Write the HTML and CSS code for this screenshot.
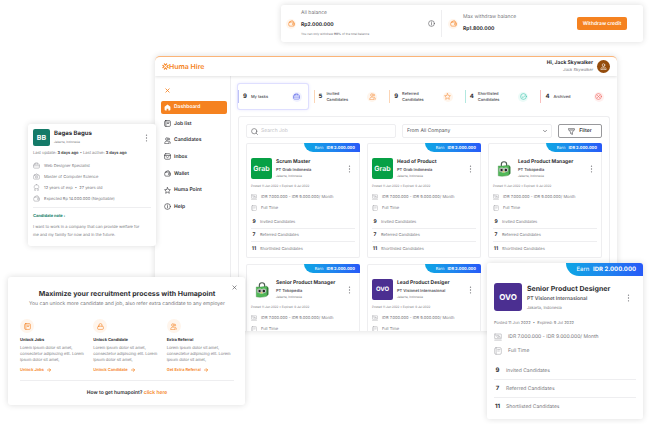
FILE: index.html
```html
<!DOCTYPE html>
<html lang="en">
<head>
<meta charset="utf-8">
<meta name="viewport" content="width=device-width, initial-scale=1">
<title>Huma Hire</title>
<link rel="stylesheet" href="styles.css">
</head>
<body>
<svg class="sprite" aria-hidden="true">
  <symbol id="i-wallet" viewBox="0 0 24 24"><rect x="2.5" y="7" width="19" height="14" rx="4"/><path d="M6 7c2-3 5-4.500 9-4.500 2 0 3 1.500 3 4.500M21.500 11.500h-4a2.500 2.500 0 0 0 0 5h4"/></symbol>
  <symbol id="i-info" viewBox="0 0 24 24"><circle cx="12" cy="12" r="10"/><path d="M12 11v6M12 6.500v1.500"/></symbol>
  <symbol id="i-close" viewBox="0 0 24 24"><path d="M4 4l16 16M20 4L4 20"/></symbol>
  <symbol id="i-home" viewBox="0 0 24 24"><path class="solid" d="M12 1.500L2 9.500V19a3.500 3.500 0 0 0 3.500 3.500H9V16h6v6.500h3.500A3.500 3.500 0 0 0 22 19V9.500z"/></symbol>
  <symbol id="i-doc" viewBox="0 0 24 24"><path d="M6 2h12a4 4 0 0 1 4 4v12a4 4 0 0 1-4 4H6a4 4 0 0 1-4-4V6a4 4 0 0 1 4-4zM6.500 2v20M11 7.500h7M11 12h5"/></symbol>
  <symbol id="i-people" viewBox="0 0 24 24"><circle cx="10" cy="7" r="4.500"/><path d="M2.500 21.500c0-5 2.500-7.500 7.500-7.500s7.500 2.500 7.500 7.500zM17 3.500a4 4 0 0 1 0 7.500M18.500 14.500c2.500 1 3.500 3.500 3.500 6.500"/></symbol>
  <symbol id="i-mail" viewBox="0 0 24 24"><rect x="2" y="2.500" width="20" height="19" rx="4"/><path d="M2 8.500h20M7 12l5 4 5-4"/></symbol>
  <symbol id="i-star" viewBox="0 0 24 24"><path d="M12 2l3 6.500 7 .8-5.200 4.900L18.300 21.500 12 18l-6.300 3.500 1.500-7.300L2 9.300l7-.8z"/></symbol>
  <symbol id="i-bag" viewBox="0 0 24 24"><rect x="2" y="6.500" width="20" height="14.500" rx="3"/><path d="M8 6.500V3h8v3.500M2 14h20"/></symbol>
  <symbol id="i-case" viewBox="0 0 24 24"><rect x="2" y="7" width="20" height="14" rx="3"/><path d="M8 7V3h8v4M2 13h20"/></symbol>
  <symbol id="i-degree" viewBox="0 0 24 24"><rect x="2" y="7" width="20" height="14" rx="3"/><path d="M6 7l6-4.500L18 7M9 12v5h6v-5z"/></symbol>
  <symbol id="i-medal" viewBox="0 0 24 24"><path d="M12 2a8 8 0 0 1 5 14.200H7A8 8 0 0 1 12 2zM7 16l-2 5.500h4M17 16l2 5.500h-4"/></symbol>
  <symbol id="i-check" viewBox="0 0 24 24"><circle cx="12" cy="12" r="10"/><path d="M7 12.500l3.500 3.500L17 9"/></symbol>
  <symbol id="i-cross" viewBox="0 0 24 24"><circle cx="12" cy="12" r="10"/><path d="M8 8l8 8M16 8l-8 8"/></symbol>
  <symbol id="i-search" viewBox="0 0 24 24"><circle cx="11" cy="11" r="9"/><path d="M17.500 17.500l5 5"/></symbol>
  <symbol id="i-funnel" viewBox="0 0 24 24"><path d="M2 2.500h20v4L15 14v8l-6-3v-5L2 6.500zM6 7h12"/></symbol>
  <symbol id="i-down" viewBox="0 0 24 24"><path d="M3 8l9 9 9-9"/></symbol>
  <symbol id="i-arrow" viewBox="0 0 24 24"><path d="M1 12h21M13 3l9 9-9 9"/></symbol>
  <symbol id="i-lock" viewBox="0 0 24 24"><rect x="2" y="11" width="20" height="11" rx="3.500"/><path d="M7 11V7a5 5 0 0 1 10 0v4"/></symbol>
  <symbol id="i-money" viewBox="0 0 24 24"><rect x="2" y="3" width="20" height="14" rx="1"/><circle cx="12" cy="10" r="3.500"/><path d="M2 21.500h20M5 7h2M17 13h2"/></symbol>
  <symbol id="i-dots" viewBox="0 0 4 14"><circle class="solid" cx="2" cy="2" r="1.100"/><circle class="solid" cx="2" cy="7" r="1.100"/><circle class="solid" cx="2" cy="12" r="1.100"/></symbol>
  <symbol id="i-burst" viewBox="0 0 24 24"><path d="M8 3l4 4 4-4M8 21l4-4 4 4M3 8l4 4-4 4M21 8l-4 4 4 4"/></symbol>
  <symbol id="i-user" viewBox="0 0 24 24"><circle cx="12" cy="7" r="4.500"/><path d="M3 21.500c0-5 3-8 9-8s9 3 9 8zM8 21l4-5 4 5"/></symbol>
  <symbol id="i-owl" viewBox="0 0 42 42">
    <path d="M14 13V9a7 7 0 0 1 14 0v4" fill="none" stroke="#4b5b50" stroke-width="3"/>
    <path d="M6 13c10 1 18-1 28-2v26c-7 3-20 4-28 2z" fill="#51b957" stroke="#3f8045"/>
    <path d="M34 11l4 4v18l-4 4z" fill="#347b3a"/>
    <path d="M8 21c4-5 10-5 12-1 3-4 9-4 12 0v5c-3 6-8 5-12 5s-10 1-12-5z" fill="#e2eadc"/>
    <circle cx="14" cy="23.500" r="5" fill="#f4f6f2" stroke="#354"/><circle cx="26.500" cy="23.500" r="5" fill="#f4f6f2" stroke="#354"/>
    <circle cx="14.500" cy="23.500" r="3.200" fill="#222"/><circle cx="26" cy="23.500" r="3.200" fill="#222"/>
    <path d="M17 27h6l-3 4z" fill="#eeb94b"/>
  </symbol>
</svg>
<div class="canvas">

  <div class="app">
    <header class="topbar">
      <a class="brand" href="#"><svg class="icon"><use href="#i-burst"/></svg>Huma Hire</a>
      <div class="user">
        <div class="user-text"><strong>Hi, Jack Skywalker</strong><span>Jack Skywalker</span></div>
        <span class="avatar"><svg class="icon"><use href="#i-user"/></svg></span>
      </div>
    </header>
    <div class="body">
      <div class="sidebar">
        <button class="collapse" aria-label="Close menu"><svg class="icon"><use href="#i-close"/></svg></button>
        <nav class="nav">
          <a class="nav-item active" href="#"><svg class="icon"><use href="#i-home"/></svg>Dashboard</a>
          <a class="nav-item" href="#"><svg class="icon"><use href="#i-doc"/></svg>Job list</a>
          <a class="nav-item" href="#"><svg class="icon"><use href="#i-people"/></svg>Candidates</a>
          <a class="nav-item" href="#"><svg class="icon"><use href="#i-mail"/></svg>Inbox</a>
          <a class="nav-item" href="#"><svg class="icon"><use href="#i-wallet"/></svg>Wallet</a>
          <a class="nav-item" href="#"><svg class="icon"><use href="#i-star"/></svg>Huma Point</a>
          <a class="nav-item" href="#"><svg class="icon"><use href="#i-info"/></svg>Help</a>
        </nav>
      </div>
      <main class="main">
        <section class="stats">
          <div class="stat blue selected"><strong>9</strong><span>My tasks</span><i class="bubble"><svg class="icon"><use href="#i-bag"/></svg></i></div>
          <div class="stat orange"><strong>5</strong><span>Invited<br>Candidates</span><i class="bubble"><svg class="icon"><use href="#i-people"/></svg></i></div>
          <div class="stat orange"><strong>9</strong><span>Referred<br>Candidates</span><i class="bubble"><svg class="icon"><use href="#i-star"/></svg></i></div>
          <div class="stat teal"><strong>4</strong><span>Shortlisted<br>Candidates</span><i class="bubble"><svg class="icon"><use href="#i-check"/></svg></i></div>
          <div class="stat red"><strong>4</strong><span>Archived</span><i class="bubble"><svg class="icon"><use href="#i-cross"/></svg></i></div>
        </section>
        <section class="panel">
          <form class="filters">
            <label class="field"><svg class="icon"><use href="#i-search"/></svg><input type="text" placeholder="Search Job" aria-label="Search job"></label>
            <label class="field"><select aria-label="Company"><option>From All Company</option></select><svg class="icon chevron"><use href="#i-down"/></svg></label>
            <button class="filter" type="button"><svg class="icon"><use href="#i-funnel"/></svg>Filter</button>
          </form>
          <div class="jobs">
            <article class="job">
              <div class="earn">Earn <b>IDR 2.000.000</b></div>
              <div class="job-head"><div class="logo grab">Grab</div><div class="job-name"><h3>Scrum Master</h3><h4>PT Grab Indonesia</h4><p>Jakarta, Indonesia</p></div><button class="more" aria-label="More"><svg><use href="#i-dots"/></svg></button></div>
              <p class="dates">Posted 11 Jun 2022 • Expired: 9 Jul 2022</p>
              <p class="fact"><svg class="icon"><use href="#i-money"/></svg>IDR 7.000.000 - IDR 9.000.000/ Month</p>
              <p class="fact"><svg class="icon"><use href="#i-doc"/></svg>Full Time</p>
              <ul class="counts"><li><b>9</b>Invited Candidates</li><li><b>7</b>Referred Candidates</li><li><b>11</b>Shortlisted Candidates</li></ul>
            </article>
            <article class="job">
              <div class="earn">Earn <b>IDR 2.000.000</b></div>
              <div class="job-head"><div class="logo grab">Grab</div><div class="job-name"><h3>Head of Product</h3><h4>PT Grab Indonesia</h4><p>Jakarta, Indonesia</p></div><button class="more" aria-label="More"><svg><use href="#i-dots"/></svg></button></div>
              <p class="dates">Posted 11 Jun 2022 • Expired: 9 Jul 2022</p>
              <p class="fact"><svg class="icon"><use href="#i-money"/></svg>IDR 7.000.000 - IDR 9.000.000/ Month</p>
              <p class="fact"><svg class="icon"><use href="#i-doc"/></svg>Full Time</p>
              <ul class="counts"><li><b>9</b>Invited Candidates</li><li><b>7</b>Referred Candidates</li><li><b>11</b>Shortlisted Candidates</li></ul>
            </article>
            <article class="job">
              <div class="earn">Earn <b>IDR 2.000.000</b></div>
              <div class="job-head"><div class="logo"><svg class="owl"><use href="#i-owl"/></svg></div><div class="job-name"><h3>Lead Product Manager</h3><h4>PT Tokopedia</h4><p>Jakarta, Indonesia</p></div><button class="more" aria-label="More"><svg><use href="#i-dots"/></svg></button></div>
              <p class="dates">Posted 11 Jun 2022 • Expired: 9 Jul 2022</p>
              <p class="fact"><svg class="icon"><use href="#i-money"/></svg>IDR 7.000.000 - IDR 9.000.000/ Month</p>
              <p class="fact"><svg class="icon"><use href="#i-doc"/></svg>Full Time</p>
              <ul class="counts"><li><b>9</b>Invited Candidates</li><li><b>7</b>Referred Candidates</li><li><b>11</b>Shortlisted Candidates</li></ul>
            </article>
            <article class="job">
              <div class="earn">Earn <b>IDR 2.000.000</b></div>
              <div class="job-head"><div class="logo"><svg class="owl"><use href="#i-owl"/></svg></div><div class="job-name"><h3>Senior Product Manager</h3><h4>PT Tokopedia</h4><p>Jakarta, Indonesia</p></div><button class="more" aria-label="More"><svg><use href="#i-dots"/></svg></button></div>
              <p class="dates">Posted 11 Jun 2022 • Expired: 9 Jul 2022</p>
              <p class="fact"><svg class="icon"><use href="#i-money"/></svg>IDR 7.000.000 - IDR 9.000.000/ Month</p>
              <p class="fact"><svg class="icon"><use href="#i-doc"/></svg>Full Time</p>
            </article>
            <article class="job">
              <div class="earn">Earn <b>IDR 2.000.000</b></div>
              <div class="job-head"><div class="logo ovo">OVO</div><div class="job-name"><h3>Lead Product Desiger</h3><h4>PT Visionet Internasional</h4><p>Jakarta, Indonesia</p></div><button class="more" aria-label="More"><svg><use href="#i-dots"/></svg></button></div>
              <p class="dates">Posted 11 Jun 2022 • Expired: 9 Jul 2022</p>
              <p class="fact"><svg class="icon"><use href="#i-money"/></svg>IDR 7.000.000 - IDR 9.000.000/ Month</p>
              <p class="fact"><svg class="icon"><use href="#i-doc"/></svg>Full Time</p>
            </article>
          </div>
        </section>
      </main>
    </div>
  </div>

  <section class="float balance">
    <div class="amount">
      <i class="bubble"><svg class="icon"><use href="#i-wallet"/></svg></i>
      <div class="amount-text"><span>All balance</span><strong>Rp2.000.000</strong><small>You can only withdraw <b>90%</b> of the total balance</small></div>
      <svg class="icon info"><use href="#i-info"/></svg>
    </div>
    <div class="amount">
      <i class="bubble"><svg class="icon"><use href="#i-wallet"/></svg></i>
      <div class="amount-text"><span>Max withdraw balance</span><strong>Rp1.800.000</strong></div>
      <button class="withdraw">Withdraw credit</button>
    </div>
  </section>

  <section class="float candidate">
    <div class="cand-head"><div class="initials">BB</div><div class="cand-name"><h3>Bagas Bagus</h3><p>Jakarta, Indonesia</p></div><button class="more" aria-label="More"><svg><use href="#i-dots"/></svg></button></div>
    <p class="updated">Last update: <b>3 days ago</b> • Last active: <b>3 days ago</b></p>
    <ul class="facts">
      <li><svg class="icon"><use href="#i-case"/></svg>Web Designer Specialist</li>
      <li><svg class="icon"><use href="#i-degree"/></svg>Master of Computer Science</li>
      <li><svg class="icon"><use href="#i-medal"/></svg>12 years of exp &nbsp;•&nbsp; 27 years old</li>
      <li><svg class="icon"><use href="#i-wallet"/></svg>Expected Rp 14.000.000 (Negotiable)</li>
    </ul>
    <div class="note"><h4>Candidate note :</h4><p>I want to work in a company that can provide welfare for<br>me and my family for now and in the future.</p></div>
  </section>

  <section class="float promo">
    <button class="dismiss" aria-label="Close"><svg class="icon"><use href="#i-close"/></svg></button>
    <h2>Maximize your recruitment process with Humapoint</h2>
    <p class="lead">You can unlock more candidate and job, also refer extra candidate to any employer</p>
    <div class="perks">
      <div class="perk"><i class="bubble"><svg class="icon"><use href="#i-doc"/></svg></i><h3>Unlock Jobs</h3><p>Lorem ipsum dolor sit amet,<br>consectetur adipiscing elit. Lorem<br>ipsum dolor sit amet,</p><a href="#">Unlock Jobs <svg class="icon"><use href="#i-arrow"/></svg></a></div>
      <div class="perk"><i class="bubble"><svg class="icon"><use href="#i-lock"/></svg></i><h3>Unlock Candidate</h3><p>Lorem ipsum dolor sit amet,<br>consectetur adipiscing elit. Lorem<br>ipsum dolor sit amet,</p><a href="#">Unlock Candidate <svg class="icon"><use href="#i-arrow"/></svg></a></div>
      <div class="perk"><i class="bubble"><svg class="icon"><use href="#i-people"/></svg></i><h3>Extra Referral</h3><p>Lorem ipsum dolor sit amet,<br>consectetur adipiscing elit. Lorem<br>ipsum dolor sit amet,</p><a href="#">Get Extra Referral <svg class="icon"><use href="#i-arrow"/></svg></a></div>
    </div>
    <p class="how">How to get humapoint? <a href="#">click here</a></p>
  </section>

  <article class="float job large">
    <div class="earn">Earn <b>IDR 2.000.000</b></div>
    <div class="job-head"><div class="logo ovo">OVO</div><div class="job-name"><h3>Senior Product Designer</h3><h4>PT Visionet Internasional</h4><p>Jakarta, Indonesia</p></div><button class="more" aria-label="More"><svg><use href="#i-dots"/></svg></button></div>
    <p class="dates">Posted 11 Jun 2022 &nbsp;•&nbsp; Expired: 9 Jul 2022</p>
    <p class="fact"><svg class="icon"><use href="#i-money"/></svg>IDR 7.000.000 - IDR 9.000.000/ Month</p>
    <p class="fact"><svg class="icon"><use href="#i-doc"/></svg>Full Time</p>
    <ul class="counts"><li><b>9</b>Invited Candidates</li><li><b>7</b>Referred Candidates</li><li><b>11</b>Shortlisted Candidates</li></ul>
  </article>
</div>
</body>
</html>
```
FILE: styles.css
```css
:root {
  --orange: #f58220;
  --ink: #2f2f33;
  --gray: #77777c;
  --line: #eeeef0;
}
* { box-sizing: border-box; margin: 0; padding: 0; }
body { background: #fff; color: var(--ink); font-family: Inter, "Liberation Sans", sans-serif; font-size: 4px; line-height: 6px; text-rendering: geometricPrecision; }
button, input, select { font: inherit; color: inherit; border: 0; background: none; text-rendering: inherit; }
a { color: inherit; text-decoration: none; }
ul { list-style: none; }
.sprite { position: absolute; width: 0; height: 0; }
.icon { width: 7px; height: 7px; flex: none; fill: none; stroke: currentColor; stroke-width: 2; stroke-linecap: round; stroke-linejoin: round; }
.solid { fill: currentColor; stroke: none; }
.canvas { position: relative; min-height: 100vh; overflow: hidden; }
.float { position: absolute; background: #fff; border-radius: 3px; box-shadow: 0 0 6px rgba(0, 0, 0, .14); }
.bubble { display: flex; align-items: center; justify-content: center; width: 10px; height: 10px; flex: none; border-radius: 50%; background: #fff5ec; color: var(--orange); }
.more { display: flex; align-self: center; }
.more svg { width: 3px; height: 8px; color: #77777c; }

/* Application window */
.app { position: absolute; left: 155px; right: 33px; top: 56px; bottom: 93px; display: flex; flex-direction: column; overflow: hidden; border-top: 1px solid #fbb478; border-radius: 5px 5px 0 0; background: #fff; box-shadow: 0 0 6px rgba(0, 0, 0, .14); }
.topbar { position: relative; display: flex; align-items: center; justify-content: space-between; height: 19px; flex: none; padding: 0 7px; box-shadow: 0 1px 3px rgba(0, 0, 0, .12); }
.brand { display: flex; align-items: center; color: var(--orange); font-size: 7px; font-weight: 600; line-height: 10px; }
.brand .icon { stroke-width: 4; }
.user { display: flex; align-items: center; gap: 4px; }
.user-text { display: flex; flex-direction: column; text-align: right; }
.user-text strong { font-size: 5px; line-height: 7px; font-weight: 700; }
.user-text span { color: var(--gray); font-style: italic; }
.avatar { display: flex; align-items: center; justify-content: center; width: 13px; height: 13px; border-radius: 50%; background: #944c0c; color: #fff; }
.body { display: flex; flex: 1; min-height: 0; }
.sidebar { flex: none; width: 76px; padding: 10px 3px 0 6px; border-right: 1px solid var(--line); }
.collapse { display: flex; align-items: center; height: 9px; margin: 0 0 4px 4px; color: var(--orange); }
.collapse .icon { width: 5px; height: 5px; stroke-width: 4; }
.nav { display: grid; grid-template-rows: repeat(7, 1fr); align-items: center; height: 116px; }
.nav-item { display: flex; align-items: center; gap: 3px; height: 13px; padding: 0 3px; border-radius: 2px; font-size: 5px; font-weight: 600; }
.nav-item.active { background: var(--orange); color: #fff; }
.main { display: flex; flex: 1; flex-direction: column; gap: 7px; min-width: 0; padding: 8px 7px 0; }
.stats { display: grid; grid-template-columns: repeat(5, 1fr); gap: 6px; }
.stat { display: flex; align-items: center; gap: 4px; height: 25px; padding-right: 6px; }
.stat::before { content: ""; width: 1px; height: 13px; background: currentColor; opacity: .4; }
.stat strong { color: var(--ink); font-size: 6px; font-weight: 700; }
.stat span { flex: 1; color: #4c4c51; font-weight: 500; }
.stat.selected { border-radius: 2px; box-shadow: 0 0 0 1px #dfdfff, 0 0 4px #dcdcff; }
.stat.blue { color: #5b67e8; }
.stat.orange { color: #f79545; }
.stat.teal { color: #3fc6b0; }
.stat.red { color: #f0605c; }
.stat .bubble { color: inherit; }
.stat.blue .bubble { background: #f0f1ff; }
.stat.teal .bubble { background: #ecfbf8; }
.stat.red .bubble { background: #fff0ef; }
.panel { flex: 1; padding: 7px; border: 1px solid var(--line); border-bottom: 0; border-radius: 3px 3px 0 0; }
.filters { display: flex; gap: 6px; }
.field { display: flex; flex: 1; align-items: center; gap: 3px; min-width: 0; height: 14px; padding: 0 4px; border: 1px solid var(--line); border-radius: 2px; color: #55555a; font-size: 5px; }
.field input, .field select { width: 100%; min-width: 0; height: 10px; outline: 0; appearance: none; }
.field input::placeholder { color: #c4c4c8; }
.field .chevron { width: 4px; height: 4px; stroke-width: 4; }
.filter { display: flex; align-items: center; justify-content: center; gap: 4px; width: 44px; height: 14px; border: 1px solid #99999c; border-radius: 2px; font-size: 5px; font-weight: 600; }
.jobs { display: grid; grid-template-columns: repeat(3, 1fr); gap: 6px 7px; margin-top: 5px; }

/* Job card */
.job { display: flex; flex-direction: column; padding: 0 5px 3px; border-radius: 2px; background: #fff; }
.jobs .job { box-shadow: inset 0 0 0 1px var(--line); }
.earn { align-self: flex-end; width: 56px; height: 9px; margin-right: -5px; padding-right: 5px; border-radius: 0 2px 0 9px; background: linear-gradient(80deg, #0ca7e4, #1f86ee 50%, #2858f8); color: #fff; font-size: 4px; line-height: 9px; text-align: right; }
.earn b { margin-left: 2px; font-weight: 700; }
.job-head { display: flex; gap: 4px; margin-top: 6px; padding-right: 4px; }
.logo { display: flex; align-items: center; justify-content: center; flex: none; width: 21px; height: 21px; border-radius: 2px; color: #fff; font-size: 7px; font-weight: 600; }
.owl { width: 16px; height: 16px; }
.grab { background: #06a045; }
.ovo { background: #4b2f91; font-size: 6px; font-weight: 700; }
.job-name { flex: 1; min-width: 0; white-space: nowrap; }
.job-name h3 { font-size: 5px; line-height: 8px; font-weight: 700; }
.job-name h4 { font-size: 4px; line-height: 7px; font-weight: 600; color: #55555a; }
.job-name p { font-size: 3px; line-height: 6px; color: var(--gray); }
.dates { margin: 4px 0 2px; font-size: 3px; line-height: 6px; color: var(--gray); white-space: nowrap; }
.fact { display: flex; align-items: center; gap: 4px; height: 11px; color: var(--gray); white-space: nowrap; }
.fact .icon { width: 6px; height: 6px; color: #b4b4b8; }
.counts { margin-top: 3px; }
.counts li { display: flex; align-items: center; gap: 3px; height: 13px; border-bottom: 1px solid var(--line); color: var(--gray); }
.counts li:last-child { border-bottom: 0; }
.counts b { width: 6px; color: var(--ink); font-size: 5px; text-align: center; }

.large { right: 7px; top: 263px; width: 156px; padding: 0 7px 3px; }
.large .earn { width: 77px; height: 13px; margin-right: -7px; padding-right: 7px; border-radius: 0 3px 0 13px; font-size: 6px; line-height: 13px; }
.large .job-head { gap: 5px; margin-top: 7px; padding-right: 6px; }
.large .logo { width: 28px; height: 28px; border-radius: 3px; font-size: 8px; }
.large .job-name h3 { font-size: 7px; line-height: 11px; }
.large .job-name h4 { font-size: 5px; line-height: 10px; }
.large .job-name p { font-size: 4px; line-height: 8px; }
.large .dates { margin: 6px 0 3px; font-size: 4px; line-height: 9px; }
.large .fact { gap: 6px; height: 14px; font-size: 5px; }
.large .fact .icon { width: 8px; height: 8px; }
.large .counts { margin-top: 4px; }
.large .counts li { gap: 5px; height: 18px; font-size: 5px; }
.large .counts b { width: 7px; font-size: 6px; }

/* Balance card */
.balance { left: 281px; right: 7px; top: 5px; display: grid; grid-template-columns: 160px 1fr; height: 37px; }
.amount { display: flex; align-items: center; gap: 5px; padding: 0 6px 0 5px; }
.amount + .amount { position: relative; padding: 0 16px 0 7px; }
.amount + .amount::before { content: ""; position: absolute; left: 0; top: 5px; bottom: 5px; width: 1px; background: var(--line); }
.amount-text { display: flex; flex: 1; flex-direction: column; padding-bottom: 2px; color: var(--gray); font-size: 5px; line-height: 12px; }
.amount-text strong { color: var(--ink); }
.amount-text small { font-size: 3px; line-height: 7px; }
.info { color: #55555a; }
.withdraw { width: 50px; height: 13px; border-radius: 2px; background: var(--orange); color: #fff; font-size: 5px; font-weight: 600; white-space: nowrap; }

/* Candidate card */
.candidate { left: 28px; top: 124px; width: 128px; padding: 5px 5px 7px; }
.cand-head { display: flex; gap: 4px; padding-right: 3px; }
.initials { width: 17px; height: 17px; border-radius: 2px; background: #147a68; color: #fff; font-size: 7px; font-weight: 700; line-height: 17px; text-align: center; }
.cand-name { flex: 1; }
.cand-name h3 { font-size: 6px; line-height: 9px; }
.cand-name p { font-size: 3px; line-height: 8px; color: var(--gray); }
.updated { margin: 4px 0; color: var(--gray); white-space: nowrap; }
.updated b { color: var(--ink); font-weight: 600; }
.facts li { display: flex; align-items: center; gap: 4px; height: 11px; color: var(--gray); }
.facts .icon { color: #a4a4a8; }
.note { margin-top: 3px; padding-top: 4px; border-top: 1px solid var(--line); }
.note h4 { line-height: 8px; color: #14806c; }
.note p { margin-top: 3px; line-height: 8px; color: var(--gray); white-space: nowrap; }

/* Humapoint card */
.promo { left: 8px; top: 277px; width: 237px; padding: 11px 11px 7px 12px; text-align: center; }
.dismiss { position: absolute; right: 8px; top: 8px; display: flex; color: #55555a; }
.dismiss .icon { width: 5px; height: 5px; stroke-width: 3; }
.promo h2 { font-size: 7px; line-height: 11px; font-weight: 700; white-space: nowrap; }
.lead { font-size: 5px; line-height: 10px; color: var(--gray); white-space: nowrap; }
.perks { display: grid; grid-template-columns: repeat(3, 1fr); gap: 6px; padding: 10px 0 7px; border-bottom: 1px solid var(--line); text-align: left; }
.perk .bubble { width: 14px; height: 14px; }
.perk h3 { margin: 3px 0 1px; font-size: 4px; line-height: 8px; }
.perk p { line-height: 6px; color: var(--gray); white-space: nowrap; }
.perk a { display: flex; align-items: center; gap: 3px; margin-top: 4px; height: 6px; color: var(--orange); font-weight: 600; }
.perk a .icon { width: 4px; height: 4px; stroke-width: 4; }
.how { margin-top: 7px; font-size: 5px; line-height: 10px; font-weight: 600; }
.how a { color: var(--orange); }
```
